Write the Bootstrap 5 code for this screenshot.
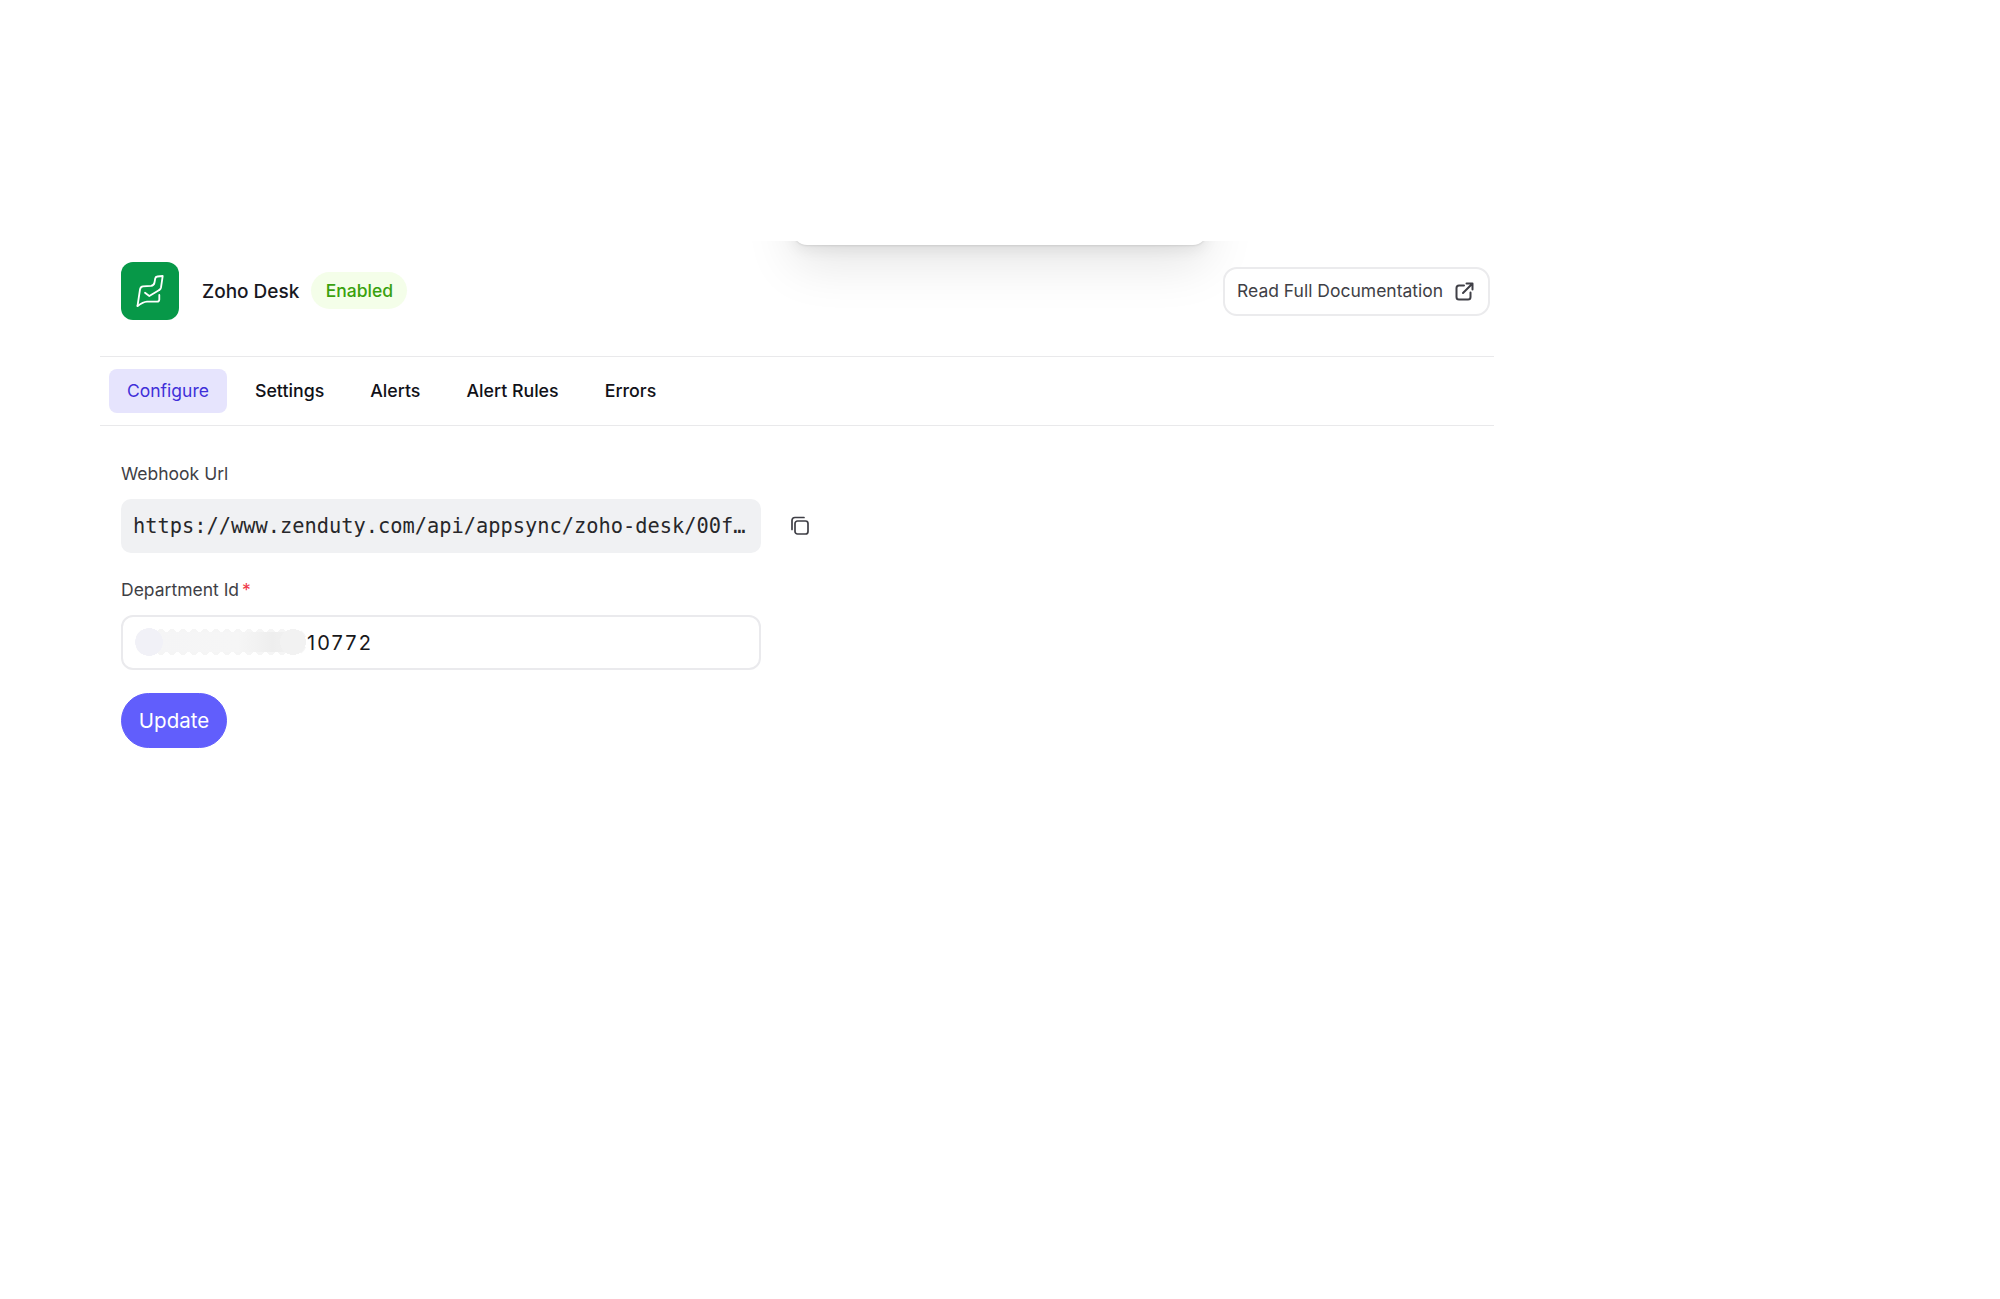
<!doctype html>
<html lang="en">
<head>
<meta charset="utf-8">
<title>Zoho Desk</title>
<link href="https://cdn.jsdelivr.net/npm/bootstrap@5.3.0/dist/css/bootstrap.min.css" rel="stylesheet">
<style>
body{font-family:Inter,"Liberation Sans",sans-serif;background:#fff;color:#18181b;position:relative;min-height:1299px}
.zd-clip{position:absolute;left:640px;top:241px;width:760px;height:140px;overflow:hidden;pointer-events:none}
.zd-panel{position:absolute;left:153px;top:-100px;width:414px;height:104px;background:#fff;border-radius:0 0 14px 14px;box-shadow:0 1px 2px rgba(0,0,0,.09),0 6px 14px rgba(0,0,0,.06),0 20px 50px rgba(0,0,0,.1)}
.zd-page{position:relative;width:1394px;margin-left:100px;padding-top:262px}
.zd-head{padding:0 4px 0 21px;height:95px;padding-bottom:37px;border-bottom:1px solid #e9e9eb}
.zd-logo{width:58px;height:58px;border-radius:12px;background:#079848}
.zd-name{font-size:19px;font-weight:500;margin-left:23px;color:#18181f;padding-top:3px}
.zd-state{font-size:17.5px;font-weight:500;color:#3aa10e;background:#f4fee9;border-radius:19px;height:37px;width:96px;margin-left:12px;padding-top:2px}
.zd-doc{width:267px;height:49px;margin-top:1px;border:2px solid #ebebed;border-radius:14px;font-size:17.5px;color:#3f3f46;background:#fff;padding:0 14px 0 12px;text-decoration:none;white-space:nowrap}
.zd-tabs{padding:12px 9px;height:69px;border-bottom:1px solid #e9e9eb;gap:10px}
.zd-tab{font-size:17.8px;font-weight:500;color:#111118;height:44px;padding:0 18px;border-radius:8px;text-decoration:none}
.zd-tab.zd-on{background:#e6e4fd;color:#3f2fd9;font-weight:400;font-size:17.5px}
.zd-form{padding:37px 0 0 21px}
.zd-label{font-size:17.5px;color:#3f3f46;line-height:22px;margin-bottom:14px;display:block}
.zd-req{color:#ef3a4a;margin-left:3px}
.zd-row{margin-bottom:26px}
.zd-url{width:640px;height:54px;background:#f0f1f3;border-radius:10px;padding:0 14px 0 12px;font:20.35px/54px "DejaVu Sans Mono",monospace;color:#27272a;white-space:nowrap;overflow:hidden;text-overflow:ellipsis}
.zd-copy{margin-left:29px;margin-bottom:2px;color:#3f3f46}
.zd-field{position:relative;width:640px;margin-bottom:23px}
.zd-input{height:55px;border:2px solid #eaeaed;border-radius:12px;padding:0 12px 0 184px;font-size:20px;letter-spacing:2.1px;color:#18181b;box-shadow:none}
.zd-input:focus{border-color:#eaeaed;box-shadow:none}
.zd-smudge{position:absolute;left:14px;top:13px;width:172px;height:28px;border-radius:14px;background:
  radial-gradient(circle 14px at 14px 14px,#f1f1f7 98%,transparent 100%),
  radial-gradient(circle 13px at 158px 14px,#f2f2f2 98%,transparent 100%),
  linear-gradient(90deg,transparent 20px,#f5f5f6 20px,#f6f6f6 60%,#eeeeee 80%,#f2f2f2 92%,transparent 92%) 0 4px/100% 20px no-repeat,
  radial-gradient(circle 4px at 6px 5px,#f5f5f5 98%,transparent 100%) 20px 0/11px 28px repeat-x,
  radial-gradient(circle 4px at 6px 23px,#f5f5f5 98%,transparent 100%) 20px 0/11px 28px repeat-x;
  filter:blur(.7px)}
.zd-btn{--bs-btn-bg:#615efc;--bs-btn-border-color:#615efc;--bs-btn-hover-bg:#5552ee;--bs-btn-hover-border-color:#5552ee;--bs-btn-color:#fff;--bs-btn-hover-color:#fff;width:106px;height:55px;border-radius:28px;font-size:20.5px;padding:1px 0 0}
</style>
</head>
<body>
<div class="zd-clip"><div class="zd-panel"></div></div>
<main class="zd-page">
  <header class="zd-head d-flex align-items-center">
    <div class="zd-logo d-flex align-items-center justify-content-center flex-shrink-0">
      <svg width="58" height="58" viewBox="0 0 58 58" fill="none" stroke="#fff" stroke-width="1.8" stroke-linecap="round" stroke-linejoin="round">
        <path d="M16.500 44 19 27.500Q19.500 24.500 22 24.300L30 23.800Q33 23.500 33.500 20.500L34.200 16.500Q34.500 14.700 36.500 14.500L41.700 14 40 25.500Q39.700 27 38.300 28"/>
        <path d="M38.300 33V37.500Q38.300 39.700 36 39.700H26Q22 40 16.500 44"/>
        <path d="M24 30.700 28.300 34 38.300 28"/>
      </svg>
    </div>
    <span class="zd-name">Zoho Desk</span>
    <span class="zd-state d-inline-flex align-items-center justify-content-center">Enabled</span>
    <a href="#" class="zd-doc d-flex align-items-center justify-content-between ms-auto">
      <span>Read Full Documentation</span>
      <svg width="19" height="19" viewBox="0 0 19 19" fill="none" stroke="#3f3f46" stroke-width="2" stroke-linecap="round" stroke-linejoin="round">
        <path d="M9 3.500H4Q1.500 3.500 1.500 6V15Q1.500 17.500 4 17.500H13Q15.500 17.500 15.500 15V10.500"/>
        <path d="M8 11 17.500 1.500M11.500 1.500H17.500V7.500"/>
      </svg>
    </a>
  </header>
  <nav class="zd-tabs d-flex align-items-center">
    <a href="#" class="zd-tab zd-on d-flex align-items-center">Configure</a>
    <a href="#" class="zd-tab d-flex align-items-center">Settings</a>
    <a href="#" class="zd-tab d-flex align-items-center">Alerts</a>
    <a href="#" class="zd-tab d-flex align-items-center">Alert Rules</a>
    <a href="#" class="zd-tab d-flex align-items-center">Errors</a>
  </nav>
  <form class="zd-form">
    <label class="zd-label">Webhook Url</label>
    <div class="d-flex align-items-center zd-row">
      <div class="zd-url">https://www.zenduty.com/api/appsync/zoho-desk/00f8a1c7e2b94d6f</div>
      <span class="zd-copy d-inline-flex">
        <svg width="19" height="19" viewBox="0 0 19 19" fill="none" stroke="currentColor" stroke-width="1.7" stroke-linecap="round" stroke-linejoin="round">
          <rect x="5" y="5" width="13" height="13" rx="2.500"/>
          <path d="M2 13.500V4.500Q2 1.500 5 1.500H14"/>
        </svg>
      </span>
    </div>
    <label class="zd-label">Department Id<span class="zd-req">*</span></label>
    <div class="zd-field">
      <input class="form-control zd-input" type="text" value="10772" aria-label="Department Id">
      <span class="zd-smudge"></span>
    </div>
    <button type="button" class="btn zd-btn">Update</button>
  </form>
</main>
<script src="https://cdn.jsdelivr.net/npm/bootstrap@5.3.0/dist/js/bootstrap.bundle.min.js"></script>
</body>
</html>
